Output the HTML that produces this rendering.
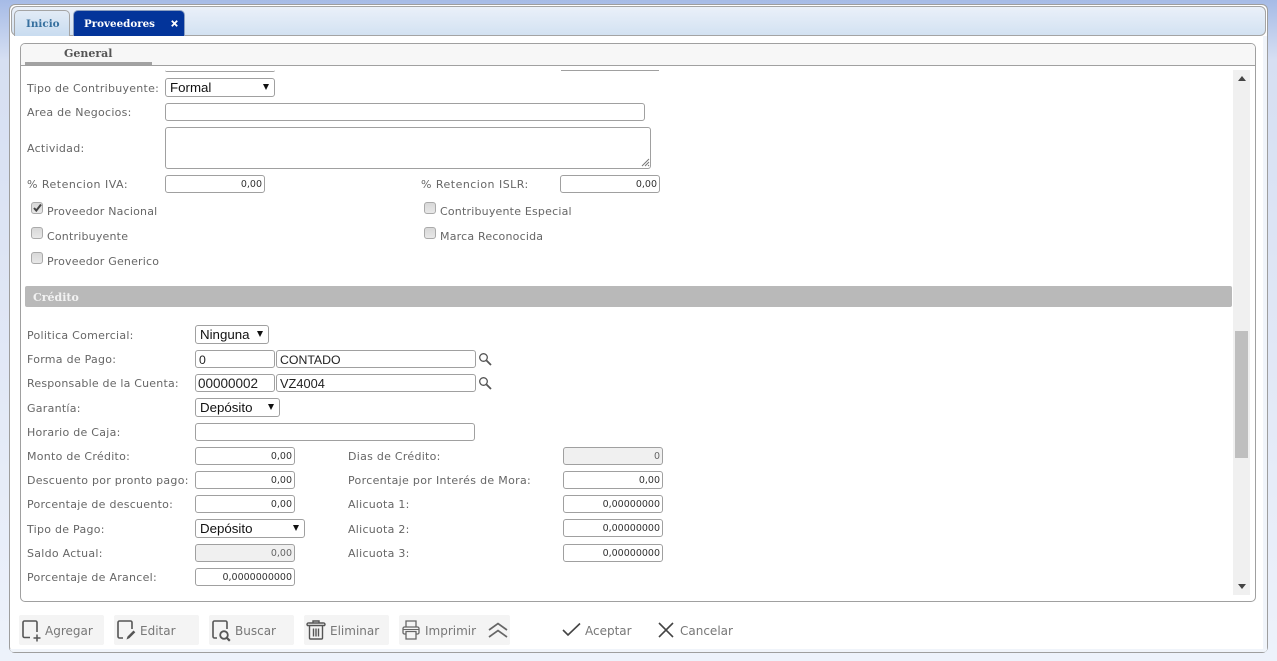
<!DOCTYPE html>
<html lang="es"><head><meta charset="utf-8"><title>Proveedores</title>
<style>
html,body{margin:0;padding:0;width:1277px;height:661px;overflow:hidden}
body{position:relative;background:linear-gradient(#a6bbe6 0,#d6dff2 60px,#dfe6f5 300px,#edf2fb 661px);font-family:"DejaVu Sans",sans-serif}
div,span{position:absolute;box-sizing:border-box}
svg{position:absolute;overflow:visible}
.l{font-size:11px;color:#666;white-space:nowrap;line-height:14px;height:14px;letter-spacing:.27px;margin-top:1px}
.p{letter-spacing:.48px}
.k{letter-spacing:.2px}
.i{height:18px;border:1px solid #a0a0a0;border-radius:3px;background:#fff;font-size:9.5px;color:#333;text-align:right;line-height:18px;padding-right:2px;white-space:nowrap}
.d{background:#f0f0f0;color:#666}
.t{font:12.3px/18px "Liberation Sans",sans-serif;color:#222;text-align:left;padding-left:3px;padding-right:0}
.s{height:19px;border:1px solid #a0a0a0;border-radius:3px;background:#fff;font:13.3px/18px "Liberation Sans",sans-serif;color:#111;padding-left:4px;white-space:nowrap}
.s:after{content:"";position:absolute;right:5px;top:5px;border-left:3.5px solid transparent;border-right:3.5px solid transparent;border-top:6px solid #111}
.c{width:12px;height:12px;border:1px solid #aaa;border-radius:3px;background:linear-gradient(#d8d8d8,#e8e8e8)}
.b{height:30px;top:615px;background:#f4f4f4;border-radius:2px}
.bl{font-size:12px;color:#777;white-space:nowrap;line-height:16px;top:623px}
</style></head><body>
<div style="left:9px;top:4px;width:1259px;height:649px;background:#fff;border:1px solid #9e9e9e;border-radius:6px"></div>
<div style="left:1263px;top:36px;width:4px;height:614px;background:#f0f4fa"></div>
<div style="left:10px;top:649px;width:1257px;height:3px;background:#f0f4fa;border-radius:0 0 5px 5px"></div>
<div style="left:11px;top:6px;width:1255px;height:30px;background:linear-gradient(#eaf0f9,#d3e2f2);border:1px solid #a4a4a4;border-radius:6px"></div>

<div style="left:14px;top:10px;width:56px;height:26px;background:linear-gradient(#e2ebf6,#c9dcf0);border:1px solid #a4a4a4;border-bottom:0;border-radius:5px 5px 0 0"></div>
<span style="left:26px;top:17px;font:bold 10.4px/14px 'DejaVu Serif',serif;color:#37709f">Inicio</span>
<div style="left:73px;top:10px;width:112px;height:26px;background:#03349a;border:1px solid #8c9fc0;border-bottom:0;border-radius:5px 5px 0 0"></div>
<span style="left:84px;top:17px;font:bold 10.3px/14px 'DejaVu Serif',serif;color:#fff">Proveedores</span>
<svg style="left:171px;top:20px" width="7" height="7"><path d="M.8.8l5.4 5.4M6.2.8L.8 6.2" stroke="#fff" stroke-width="1.8"/></svg>

<div style="left:20px;top:43px;width:1236px;height:559px;background:#fff;border:1px solid #a0a0a0;border-radius:5px"></div>
<div style="left:21px;top:44px;width:1234px;height:21px;background:#f7f7f7;border-radius:4px 4px 0 0"></div>
<div style="left:21px;top:65px;width:1234px;height:1px;background:#a0a0a0"></div>
<div style="left:25px;top:62px;width:127px;height:3px;background:#a2a2a2"></div>
<span style="left:64px;top:47px;font:bold 11px/14px 'DejaVu Serif',serif;color:#555">General</span>

<div style="left:1233px;top:70px;width:17px;height:525px;background:#f0f0f0"></div>
<div style="left:1235px;top:331px;width:13px;height:127px;background:#bfbfbf"></div>
<div style="left:1238px;top:76px;width:0;height:0;border-left:4px solid transparent;border-right:4px solid transparent;border-bottom:5px solid #444"></div>
<div style="left:1238px;top:584px;width:0;height:0;border-left:4px solid transparent;border-right:4px solid transparent;border-top:5px solid #444"></div>

<div style="left:165px;top:70px;width:110px;height:2px;background:#fff;border-bottom:1px solid #a0a0a0;border-radius:0 0 3px 3px"></div>
<div style="left:561px;top:69px;width:98px;height:2px;border-bottom:1px solid #a0a0a0"></div>

<span class="l" style="left:27px;top:81px">Tipo de Contribuyente:</span>
<div class="s" style="left:165px;top:78px;width:110px">Formal</div>
<span class="l" style="left:27px;top:105px">Area de Negocios:</span>
<div class="i" style="left:165px;top:103px;width:480px"></div>
<span class="l" style="left:27px;top:141px">Actividad:</span>
<div class="i" style="left:165px;top:127px;width:486px;height:42px"></div>
<svg style="left:641px;top:158px" width="9" height="9"><path d="M1 8L8 1M4 8L8 4M7 8L8 7" stroke="#777" stroke-width="1"/></svg>
<span class="l p" style="left:27px;top:177px">% Retencion IVA:</span>
<div class="i" style="left:165px;top:175px;width:100px">0,00</div>
<span class="l p" style="left:421px;top:177px">% Retencion ISLR:</span>
<div class="i" style="left:560px;top:175px;width:100px">0,00</div>

<div class="c" style="left:31px;top:202px"></div>
<svg style="left:32px;top:203px" width="11" height="10"><path d="M2 5l2.300 2.600L9 1.500" fill="none" stroke="#444" stroke-width="2"/></svg>
<span class="l k" style="left:47px;top:204px">Proveedor Nacional</span>
<div class="c" style="left:31px;top:227px"></div>
<span class="l k" style="left:47px;top:229px">Contribuyente</span>
<div class="c" style="left:31px;top:252px"></div>
<span class="l k" style="left:47px;top:254px">Proveedor Generico</span>
<div class="c" style="left:424px;top:202px"></div>
<span class="l k" style="left:440px;top:204px">Contribuyente Especial</span>
<div class="c" style="left:424px;top:227px"></div>
<span class="l k" style="left:440px;top:229px">Marca Reconocida</span>

<div style="left:25px;top:286px;width:1207px;height:21px;background:#b9b9b9;border-radius:2px"></div>
<span style="left:33px;top:291px;font:bold 11px/14px 'DejaVu Serif',serif;color:#f2f2f2">Crédito</span>

<span class="l" style="left:27px;top:328px">Politica Comercial:</span>
<div class="s" style="left:195px;top:325px;width:74px">Ninguna</div>
<span class="l" style="left:27px;top:352px">Forma de Pago:</span>
<div class="i t" style="left:195px;top:350px;width:80px">0</div>
<div class="i t" style="left:276px;top:350px;width:200px">CONTADO</div>
<svg style="left:478px;top:352px" width="14" height="14"><circle cx="5.500" cy="5.500" r="3.800" fill="none" stroke="#555" stroke-width="1.300"/><path d="M8.500 8.500l4.500 4.500" stroke="#555" stroke-width="1.800"/></svg>
<span class="l k" style="left:27px;top:376px">Responsable de la Cuenta:</span>
<div class="i t" style="left:195px;top:374px;width:80px;font-size:13.500px;padding-left:2px">00000002</div>
<div class="i t" style="left:276px;top:374px;width:200px;font-size:12.800px">VZ4004</div>
<svg style="left:478px;top:376px" width="14" height="14"><circle cx="5.500" cy="5.500" r="3.800" fill="none" stroke="#555" stroke-width="1.300"/><path d="M8.500 8.500l4.500 4.500" stroke="#555" stroke-width="1.800"/></svg>
<span class="l" style="left:27px;top:401px">Garantía:</span>
<div class="s" style="left:195px;top:398px;width:85px">Depósito</div>
<span class="l" style="left:27px;top:425px">Horario de Caja:</span>
<div class="i" style="left:195px;top:423px;width:280px"></div>
<span class="l" style="left:27px;top:449px">Monto de Crédito:</span>
<div class="i" style="left:195px;top:447px;width:100px">0,00</div>
<span class="l" style="left:348px;top:449px">Dias de Crédito:</span>
<div class="i d" style="left:563px;top:447px;width:100px">0</div>
<span class="l" style="left:27px;top:473px">Descuento por pronto pago:</span>
<div class="i" style="left:195px;top:471px;width:100px">0,00</div>
<span class="l" style="left:348px;top:473px;letter-spacing:.32px">Porcentaje por Interés de Mora:</span>
<div class="i" style="left:563px;top:471px;width:100px">0,00</div>
<span class="l" style="left:27px;top:497px">Porcentaje de descuento:</span>
<div class="i" style="left:195px;top:495px;width:100px">0,00</div>
<span class="l" style="left:348px;top:497px">Alicuota 1:</span>
<div class="i" style="left:563px;top:495px;width:100px">0,00000000</div>
<span class="l" style="left:27px;top:522px">Tipo de Pago:</span>
<div class="s" style="left:195px;top:519px;width:110px">Depósito</div>
<span class="l" style="left:348px;top:522px">Alicuota 2:</span>
<div class="i" style="left:563px;top:519px;width:100px">0,00000000</div>
<span class="l" style="left:27px;top:546px">Saldo Actual:</span>
<div class="i d" style="left:195px;top:544px;width:100px">0,00</div>
<span class="l" style="left:348px;top:546px">Alicuota 3:</span>
<div class="i" style="left:563px;top:544px;width:100px">0,00000000</div>
<span class="l" style="left:27px;top:570px">Porcentaje de Arancel:</span>
<div class="i" style="left:195px;top:568px;width:100px">0,0000000000</div>

<div class="b" style="left:19px;width:85px"></div>
<div class="b" style="left:114px;width:85px"></div>
<div class="b" style="left:209px;width:85px"></div>
<div class="b" style="left:304px;width:85px"></div>
<div class="b" style="left:399px;width:111px"></div>

<svg style="left:22px;top:620px" width="20" height="22" fill="none" stroke="#555" stroke-width="1.600"><path d="M8 17.500H2.500A1.500 1.500 0 0 1 1 16V2.500A1.500 1.500 0 0 1 2.500 1h11A1.500 1.500 0 0 1 15 2.500V12"/><path d="M15 14.500v7M11.500 18h7" stroke-width="1.500"/></svg>
<span class="bl" style="left:45px">Agregar</span>
<svg style="left:117px;top:620px" width="20" height="21" fill="none" stroke="#555" stroke-width="1.600"><path d="M6 18H2.500A1.500 1.500 0 0 1 1 16.500V2.500A1.500 1.500 0 0 1 2.500 1h11A1.500 1.500 0 0 1 15 2.500V9"/><path d="M9.500 19.500l1-3 6-6 1.800 1.800-6 6z" fill="#555" stroke="none"/></svg>
<span class="bl" style="left:140px">Editar</span>
<svg style="left:212px;top:620px" width="20" height="21" fill="none" stroke="#555" stroke-width="1.600"><path d="M5 18H2.500A1.500 1.500 0 0 1 1 16.500V2.500A1.500 1.500 0 0 1 2.500 1h11A1.500 1.500 0 0 1 15 2.500V9"/><circle cx="12" cy="15" r="3.800" stroke-width="1.800"/><path d="M14.800 17.800l3 3" stroke-width="2.200"/></svg>
<span class="bl" style="left:235px">Buscar</span>
<svg style="left:307px;top:620px" width="18" height="20" fill="none" stroke="#555" stroke-width="1.400"><path d="M.5 5.500a1.500 1.500 0 0 1 1.500-2.500h14a1.500 1.500 0 0 1 1.500 2.500zM6 3V1h6v2"/><path d="M2.500 6V18a1 1 0 0 0 1 1h11a1 1 0 0 0 1-1V6M6.500 8.500v8M9 8.500v8M11.500 8.500v8"/></svg>
<span class="bl" style="left:330px">Eliminar</span>
<svg style="left:402px;top:620px" width="18" height="20" fill="none" stroke="#666" stroke-width="1.300"><path d="M4 7V1h10v6"/><path d="M4 14H2.500A1.500 1.500 0 0 1 1 12.500V8.500A1.500 1.500 0 0 1 2.500 7h13A1.500 1.500 0 0 1 17 8.500v4a1.500 1.500 0 0 1-1.500 1.500H14"/><path d="M4 11.500h10V19H4z"/><path d="M1.500 9.500h15" stroke-width="1"/></svg>
<span class="bl" style="left:425px">Imprimir</span>
<svg style="left:487px;top:622px" width="22" height="16" fill="none" stroke="#666" stroke-width="1.700"><path d="M2 8l9-6.500L20 8M2 15l9-6.500L20 15"/></svg>

<svg style="left:562px;top:622px" width="19" height="15" fill="none" stroke="#444" stroke-width="1.600"><path d="M1 8l5 5L18 1.500"/></svg>
<span class="bl" style="left:585px">Aceptar</span>
<svg style="left:658px;top:622px" width="16" height="16" fill="none" stroke="#444" stroke-width="1.600"><path d="M1 1l14 14M15 1L1 15"/></svg>
<span class="bl" style="left:680px">Cancelar</span>
</body></html>
